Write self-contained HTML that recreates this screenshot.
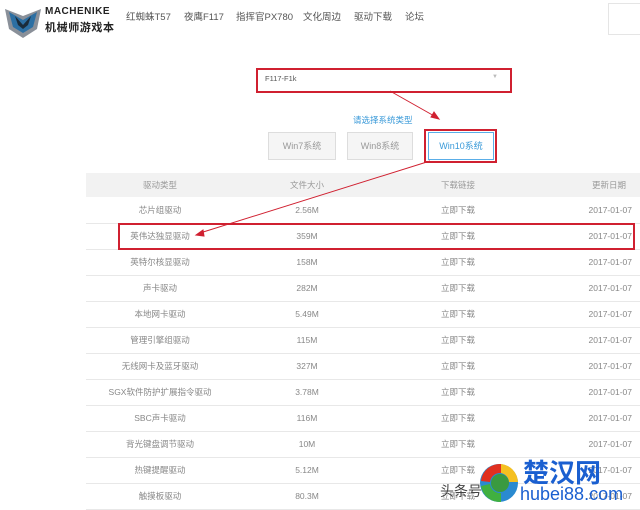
<!DOCTYPE html><html><head><meta charset="utf-8"><style>
body{margin:0;width:640px;height:507px;overflow:hidden;background:#fff;font-family:"Liberation Sans","Noto Sans CJK SC",sans-serif;position:relative;color:#888}
.a{position:absolute;white-space:nowrap}
.nav{font-size:9.5px;color:#555;top:11px;line-height:14px}
.row{position:absolute;left:86px;width:554px;height:26px;line-height:26px;border-bottom:1px solid #e8e8e8;font-size:8.5px;color:#888}
.row span{position:absolute;top:0;transform:translateX(-50%)}
.row .d{transform:none;right:8px}
.btn{position:absolute;top:132px;height:26px;border:1px solid #ddd;background:#f5f5f5;font-size:9px;color:#999;text-align:center;line-height:26px}
</style></head><body>
<svg class="a" style="left:3px;top:3px" width="40" height="36" viewBox="0 0 38 36"><path d="M1 6 L19 13 L37 6 L33 26 L19 35 L5 26Z" fill="#8a9099"/><path d="M5 9 L19 17 L33 9 L29 24 L19 30 L9 24Z" fill="#2c6fa3"/><path d="M11 13 L19 22 L27 13 L24 22 L19 26 L14 22Z" fill="#1a2b3a"/></svg>
<div class="a" style="left:45px;top:6px;font-size:10px;line-height:12px;font-weight:bold;color:#222;letter-spacing:0.5px">MACHENIKE</div>
<div class="a" style="left:45px;top:21px;font-size:11px;line-height:14px;font-weight:bold;color:#222;letter-spacing:0.6px">机械师游戏本</div>
<div class="a nav" style="left:126px">红蜘蛛T57</div>
<div class="a nav" style="left:184px">夜鹰F117</div>
<div class="a nav" style="left:236px">指挥官PX780</div>
<div class="a nav" style="left:303px">文化周边</div>
<div class="a nav" style="left:354px">驱动下载</div>
<div class="a nav" style="left:405px">论坛</div>
<div class="a" style="left:608px;top:3px;width:40px;height:30px;border:1px solid #e5e5e5"></div>
<div class="a" style="left:256px;top:68px;width:252px;height:21px;border:2px solid #d02030"></div>
<div class="a" style="left:265px;top:72px;font-size:7.5px;line-height:14px;color:#555">F117-F1k</div>
<div class="a" style="left:492px;top:74px;font-size:6px;color:#bbb">▼</div>
<div class="a" style="left:353px;top:114px;font-size:8.5px;line-height:12px;color:#3a9ad9">请选择系统类型</div>
<div class="btn" style="left:268px;width:66px">Win7系统</div>
<div class="btn" style="left:347px;width:64px">Win8系统</div>
<div class="btn" style="left:428px;width:64px;background:#fff;border-color:#5aaee8;color:#3a9ad9">Win10系统</div>
<div class="a" style="left:424px;top:129px;width:69px;height:30px;border:2px solid #d02030"></div>
<div class="a" style="left:86px;top:173px;width:554px;height:24px;line-height:24px;background:#f2f2f2;font-size:8.5px;color:#999">
<span class="a" style="left:74px;top:0;transform:translateX(-50%)">驱动类型</span>
<span class="a" style="left:221px;top:0;transform:translateX(-50%)">文件大小</span>
<span class="a" style="left:372px;top:0;transform:translateX(-50%)">下载链接</span>
<span class="a" style="right:14px;top:0">更新日期</span></div>
<div class="row" style="top:197px"><span style="left:74px">芯片组驱动</span><span style="left:221px">2.56M</span><span style="left:372px">立即下载</span><span class="d">2017-01-07</span></div>
<div class="row" style="top:223px"><span style="left:74px">英伟达独显驱动</span><span style="left:221px">359M</span><span style="left:372px">立即下载</span><span class="d">2017-01-07</span></div>
<div class="row" style="top:249px"><span style="left:74px">英特尔核显驱动</span><span style="left:221px">158M</span><span style="left:372px">立即下载</span><span class="d">2017-01-07</span></div>
<div class="row" style="top:275px"><span style="left:74px">声卡驱动</span><span style="left:221px">282M</span><span style="left:372px">立即下载</span><span class="d">2017-01-07</span></div>
<div class="row" style="top:301px"><span style="left:74px">本地网卡驱动</span><span style="left:221px">5.49M</span><span style="left:372px">立即下载</span><span class="d">2017-01-07</span></div>
<div class="row" style="top:327px"><span style="left:74px">管理引擎组驱动</span><span style="left:221px">115M</span><span style="left:372px">立即下载</span><span class="d">2017-01-07</span></div>
<div class="row" style="top:353px"><span style="left:74px">无线网卡及蓝牙驱动</span><span style="left:221px">327M</span><span style="left:372px">立即下载</span><span class="d">2017-01-07</span></div>
<div class="row" style="top:379px"><span style="left:74px">SGX软件防护扩展指令驱动</span><span style="left:221px">3.78M</span><span style="left:372px">立即下载</span><span class="d">2017-01-07</span></div>
<div class="row" style="top:405px"><span style="left:74px">SBC声卡驱动</span><span style="left:221px">116M</span><span style="left:372px">立即下载</span><span class="d">2017-01-07</span></div>
<div class="row" style="top:431px"><span style="left:74px">背光键盘调节驱动</span><span style="left:221px">10M</span><span style="left:372px">立即下载</span><span class="d">2017-01-07</span></div>
<div class="row" style="top:457px"><span style="left:74px">热键提醒驱动</span><span style="left:221px">5.12M</span><span style="left:372px">立即下载</span><span class="d">2017-01-07</span></div>
<div class="row" style="top:483px"><span style="left:74px">触摸板驱动</span><span style="left:221px">80.3M</span><span style="left:372px">立即下载</span><span class="d">2017-01-07</span></div>
<div class="a" style="left:118px;top:223px;width:513px;height:23px;border:2px solid #d02030"></div>
<svg class="a" style="left:0;top:0" width="640" height="507"><g stroke="#d02030" stroke-width="1" fill="#d02030"><line x1="390" y1="91" x2="436" y2="117"/><path d="M439 119 L431 117 L434 112Z"/><line x1="430" y1="161" x2="200" y2="233"/><path d="M196 235 L203 230 L204 236Z"/></g></svg>
<div class="a" style="left:440px;top:482px;font-size:14px;line-height:18px;color:#444">头条号</div>
<svg class="a" style="left:478px;top:462px" width="42" height="42"><circle cx="21" cy="21" r="19" fill="#2a8ad0"/><path d="M3 19 A19 19 0 0 1 23 2 L23 11 A10 10 0 0 0 12 20Z" fill="#e03020"/><path d="M23 2 A19 19 0 0 1 40 20 L31 20 A10 10 0 0 0 23 11Z" fill="#f5c020"/><path d="M3 24 A19 19 0 0 0 23 40 L23 31 A10 10 0 0 1 12 22Z" fill="#40b040"/><circle cx="22" cy="21" r="9" fill="#3a9a40"/></svg>
<div class="a" style="left:523px;top:458px;font-size:26px;line-height:30px;font-weight:bold;color:#1a5fd0">楚汉网</div>
<div class="a" style="left:520px;top:484px;font-size:18px;line-height:20px;color:#1a5fd0">hubei88.com</div>
</body></html>
